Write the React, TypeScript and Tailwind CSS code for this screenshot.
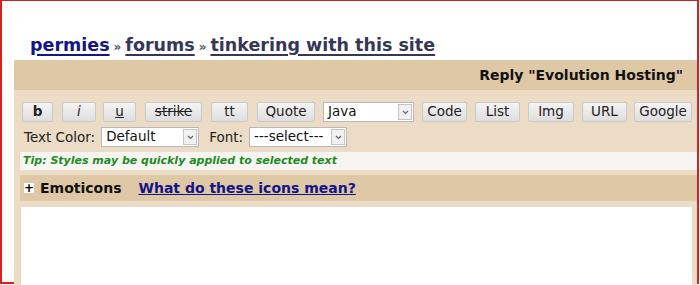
import React from "react";

const btn =
  "h-[20px] rounded-[2px] border border-[#c9c9c9] bg-gradient-to-b from-[#f4f4f4] to-[#dedede] text-[13.5px] leading-none text-[#222] flex items-center justify-center";

function Select({ label, width }: { label: string; width: string }) {
  return (
    <div className={`${width} h-[20px] flex items-center justify-between border border-[#b9b9b9] bg-white pl-[4px] pr-[1px]`}>
      <span className="text-[13.5px] leading-none text-[#111]">{label}</span>
      <span className="flex h-[16px] w-[14px] items-center justify-center border border-[#c4c4c4] bg-[#f1f1f1]">
        <svg width="7" height="5" viewBox="0 0 7 5">
          <path d="M1 1 L3.5 3.5 L6 1" stroke="#666" strokeWidth="1.2" fill="none" />
        </svg>
      </span>
    </div>
  );
}

export default function App() {
  // label, classes (width + margin before)
  const tools: [string, string][] = [
    ["b", "w-[31px] font-bold"],
    ["i", "ml-[9px] w-[34px] italic"],
    ["u", "ml-[7px] w-[33px] underline"],
    ["strike", "ml-[9px] w-[57px] line-through"],
    ["tt", "ml-[9px] w-[37px]"],
    ["Quote", "ml-[9px] w-[58px]"],
  ];
  const tools2: [string, string][] = [
    ["Code", "ml-[8px] w-[45px]"],
    ["List", "ml-[8px] w-[45px]"],
    ["Img", "ml-[8px] w-[46px]"],
    ["URL", "ml-[8px] w-[45px]"],
    ["Google", "ml-[7px] w-[58px]"],
  ];

  return (
    <div
      className="h-[285px] w-[700px] overflow-hidden bg-white"
      style={{ fontFamily: '"DejaVu Sans", Verdana, sans-serif' }}
    >
      <div className="h-[284px] w-[699px] border-t border-l-2 border-r-2 border-b-2 border-[#d92020] bg-white pl-[12px] pt-[29px]">
        <div className="flex h-[30px] items-baseline pl-[16px] text-[17.5px] font-bold leading-[30px]">
          <a className="text-[#13138a] underline decoration-[2px] underline-offset-[3px]">permies</a>
          <span className="mx-[4px] text-[12px] text-[#555]">»</span>
          <a className="text-[#363658] underline decoration-[2px] underline-offset-[3px]">forums</a>
          <span className="mx-[4px] text-[12px] text-[#555]">»</span>
          <a className="text-[#363658] underline decoration-[2px] underline-offset-[3px]">tinkering with this site</a>
        </div>
        <div className="flex h-[30px] items-center justify-end bg-[#dfc8a5] pr-[14px] pt-[1px] text-[14px] font-bold text-[#111]">
          Reply "Evolution Hosting"
        </div>
        <div className="bg-[#ecdcc5] pl-[6px] pt-[12px] pb-[1px]">
          <div className="flex items-center pl-[2px]">
            {tools.map(([t, c]) => (
              <div key={t} className={`${btn} ${c}`}>{t}</div>
            ))}
            <div className="ml-[8px]"><Select label="Java" width="w-[91px]" /></div>
            {tools2.map(([t, c]) => (
              <div key={t} className={`${btn} ${c}`}>{t}</div>
            ))}
          </div>
          <div className="mt-[5px] flex items-center pl-[4px] text-[13.5px] text-[#222]">
            <span>Text Color:</span>
            <div className="ml-[6px]"><Select label="Default" width="w-[98px]" /></div>
            <span className="ml-[10px]">Font:</span>
            <div className="ml-[6px]"><Select label="---select---" width="w-[98px]" /></div>
          </div>
          <div className="mt-[5px] flex h-[18px] items-center bg-[#f7f5f2] pl-[3px] text-[11px] font-bold italic text-[#1f8a1f]">
            Tip: Styles may be quickly applied to selected text
          </div>
          <div className="mt-[5px] flex h-[26px] items-center bg-[#dfc8a5] pl-[4px]">
            <span className="flex h-[10px] w-[10px] items-center justify-center bg-white text-[12px] font-bold leading-none text-black">+</span>
            <span className="ml-[6px] text-[14px] font-bold text-[#111]">Emoticons</span>
            <a className="ml-[17px] text-[14px] font-bold text-[#13138a] underline">What do these icons mean?</a>
          </div>
          <div className="mt-[5px] mr-[4px] h-[90px] border border-[#e6dccd] bg-white" />
        </div>
      </div>
    </div>
  );
}
